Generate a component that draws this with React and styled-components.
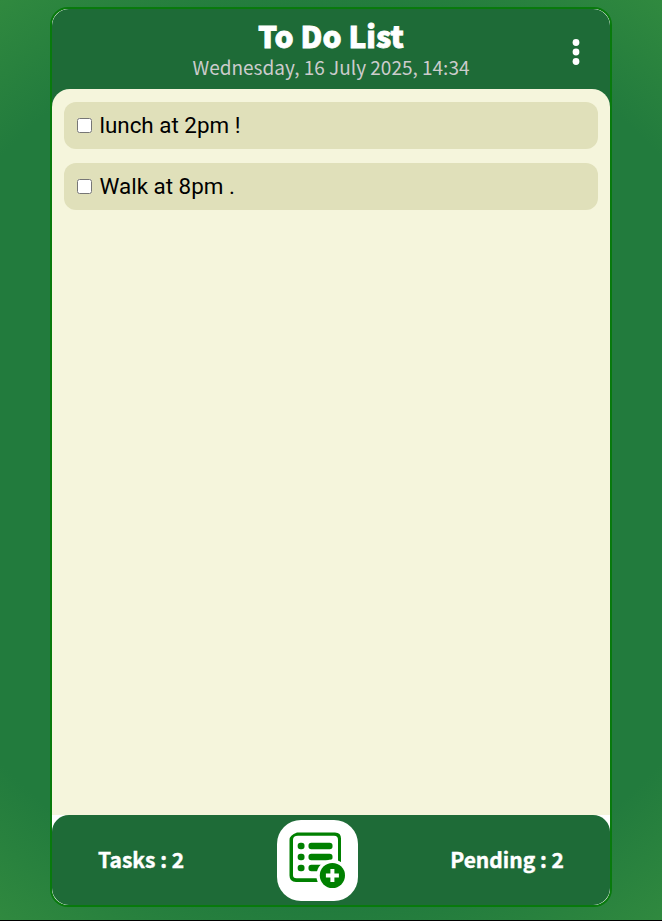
import React from "react";
import styled, { createGlobalStyle } from "styled-components";

const GlobalStyle = createGlobalStyle`
  * { box-sizing: border-box; }
  body { margin: 0; overflow: hidden; }
`;

const display = `"Noto Sans CJK SC", "Noto Sans", sans-serif`;

const Page = styled.div`
  height: 921px;
  padding-top: 7px;
  display: flex;
  justify-content: center;
  align-items: flex-start;
  border-bottom: 1px solid #000;
  background: radial-gradient(circle at center, #227b3d 0%, #227b3d 79%, #30893f 100%);
`;

const Card = styled.main`
  width: 562px;
  height: 900px;
  display: flex;
  flex-direction: column;
  border: 2px solid #087a0c;
  border-radius: 18px;
  background: #fff;
  overflow: hidden;
`;

const Header = styled.header`
  height: 80px;
  flex: none;
  display: grid;
  grid-template-columns: 68px 1fr 68px;
  align-items: center;
  background: #1e6b37;
  border-radius: 17px 17px 0 0;
`;

const Heading = styled.div`
  grid-column: 2;
  text-align: center;
  font-family: ${display};
`;

const Title = styled.h1`
  margin: 0;
  font-size: 30px;
  line-height: 34px;
  font-weight: 900;
  color: #fff;
  -webkit-text-stroke: 0.8px #fff;
`;

const Stamp = styled.p`
  margin: 0;
  padding-top: 1px;
  margin-bottom: -1px;
  font-size: 19px;
  line-height: 28px;
  color: #ccc;
`;

const MenuButton = styled.button`
  border: 0;
  padding: 6px 0 0;
  background: none;
  display: flex;
  justify-content: center;
`;

const ListArea = styled.section`
  flex: 1;
  background: #1e6b37;
  display: flex;
`;

const List = styled.ul`
  flex: 1;
  margin: 0;
  padding: 13px 12px;
  list-style: none;
  display: flex;
  flex-direction: column;
  gap: 14px;
  background: #f5f5dc;
  border-radius: 18px 18px 0 0;
`;

const Task = styled.li`
  height: 47px;
  padding-left: 13px;
  display: flex;
  align-items: center;
  gap: 7.5px;
  border-radius: 12px;
  background: #e0e0ba;
  color: #000;
  font: 22.4px/46px Roboto, sans-serif;
`;

const Check = styled.input`
  width: 15px;
  height: 15px;
  margin: 0;
`;

const Label = styled.span`
  height: 47px;
`;

const Footer = styled.footer`
  height: 90px;
  flex: none;
  display: flex;
  align-items: center;
  justify-content: space-between;
  padding: 0 46px;
  background: #1e6b37;
  border-radius: 17px;
  color: #fff;
`;

const Count = styled.span`
  margin-top: -2px;
  font: 700 21px/32px ${display};
  white-space: pre;
  -webkit-text-stroke: 0.4px #fff;
`;

const AddButton = styled.button`
  width: 81px;
  height: 81px;
  padding: 0;
  border: 0;
  border-radius: 24px;
  background: #fff;
`;

const Drawing = styled.svg`
  display: block;
`;

const tasks = ["lunch at 2pm !", "Walk at 8pm ."];

function AddIcon() {
  return (
    <Drawing width="81" height="81" viewBox="0 0 81 81" fill="none">
      <path d="M20 12.5H58Q64 12.5 64 18.5V46H61V20Q61 15.8 57 15.8H21Q16 15.8 16 20V55Q16 58.3 19.5 58.3H44V62H19Q12.5 62 12.5 55.5V20Q12.5 15 20 12.5Z" fill="#008000" />
      <g fill="#008000">
        <rect x="20.7" y="22.7" width="6.8" height="6.6" rx="2.8" />
        <rect x="31.5" y="22.7" width="24" height="6.6" rx="2.8" />
        <rect x="20.7" y="33.7" width="6.8" height="6.6" rx="2.8" />
        <rect x="31.5" y="33.7" width="24" height="6.6" rx="2.8" />
        <rect x="20.7" y="44.7" width="6.8" height="6.6" rx="2.8" />
        <rect x="31.5" y="44.7" width="16" height="6.6" rx="2.8" />
      </g>
      <circle cx="55.4" cy="55.5" r="16" fill="#fff" />
      <circle cx="55.4" cy="55.5" r="12.6" fill="#008000" />
      <path d="M55.4 49V62M48.9 55.5H61.9" stroke="#fff" strokeWidth="4" />
    </Drawing>
  );
}

export default function App() {
  return (
    <Page>
      <GlobalStyle />
      <Card>
        <Header>
          <Heading>
            <Title>To Do List</Title>
            <Stamp>Wednesday, 16 July 2025, 14:34</Stamp>
          </Heading>
          <MenuButton aria-label="Menu">
            <Drawing width="8" height="28" viewBox="0 0 8 28" fill="#fff">
              <circle cx="4" cy="4.5" r="3.4" />
              <circle cx="4" cy="14" r="3.4" />
              <circle cx="4" cy="23.5" r="3.4" />
            </Drawing>
          </MenuButton>
        </Header>
        <ListArea>
          <List>
            {tasks.map((t) => (
              <Task key={t}>
                <Check type="checkbox" aria-label={t} />
                <Label>{t}</Label>
              </Task>
            ))}
          </List>
        </ListArea>
        <Footer>
          <Count>Tasks : {tasks.length}</Count>
          <AddButton aria-label="Add task"><AddIcon /></AddButton>
          <Count>Pending : {tasks.length}</Count>
        </Footer>
      </Card>
    </Page>
  );
}
